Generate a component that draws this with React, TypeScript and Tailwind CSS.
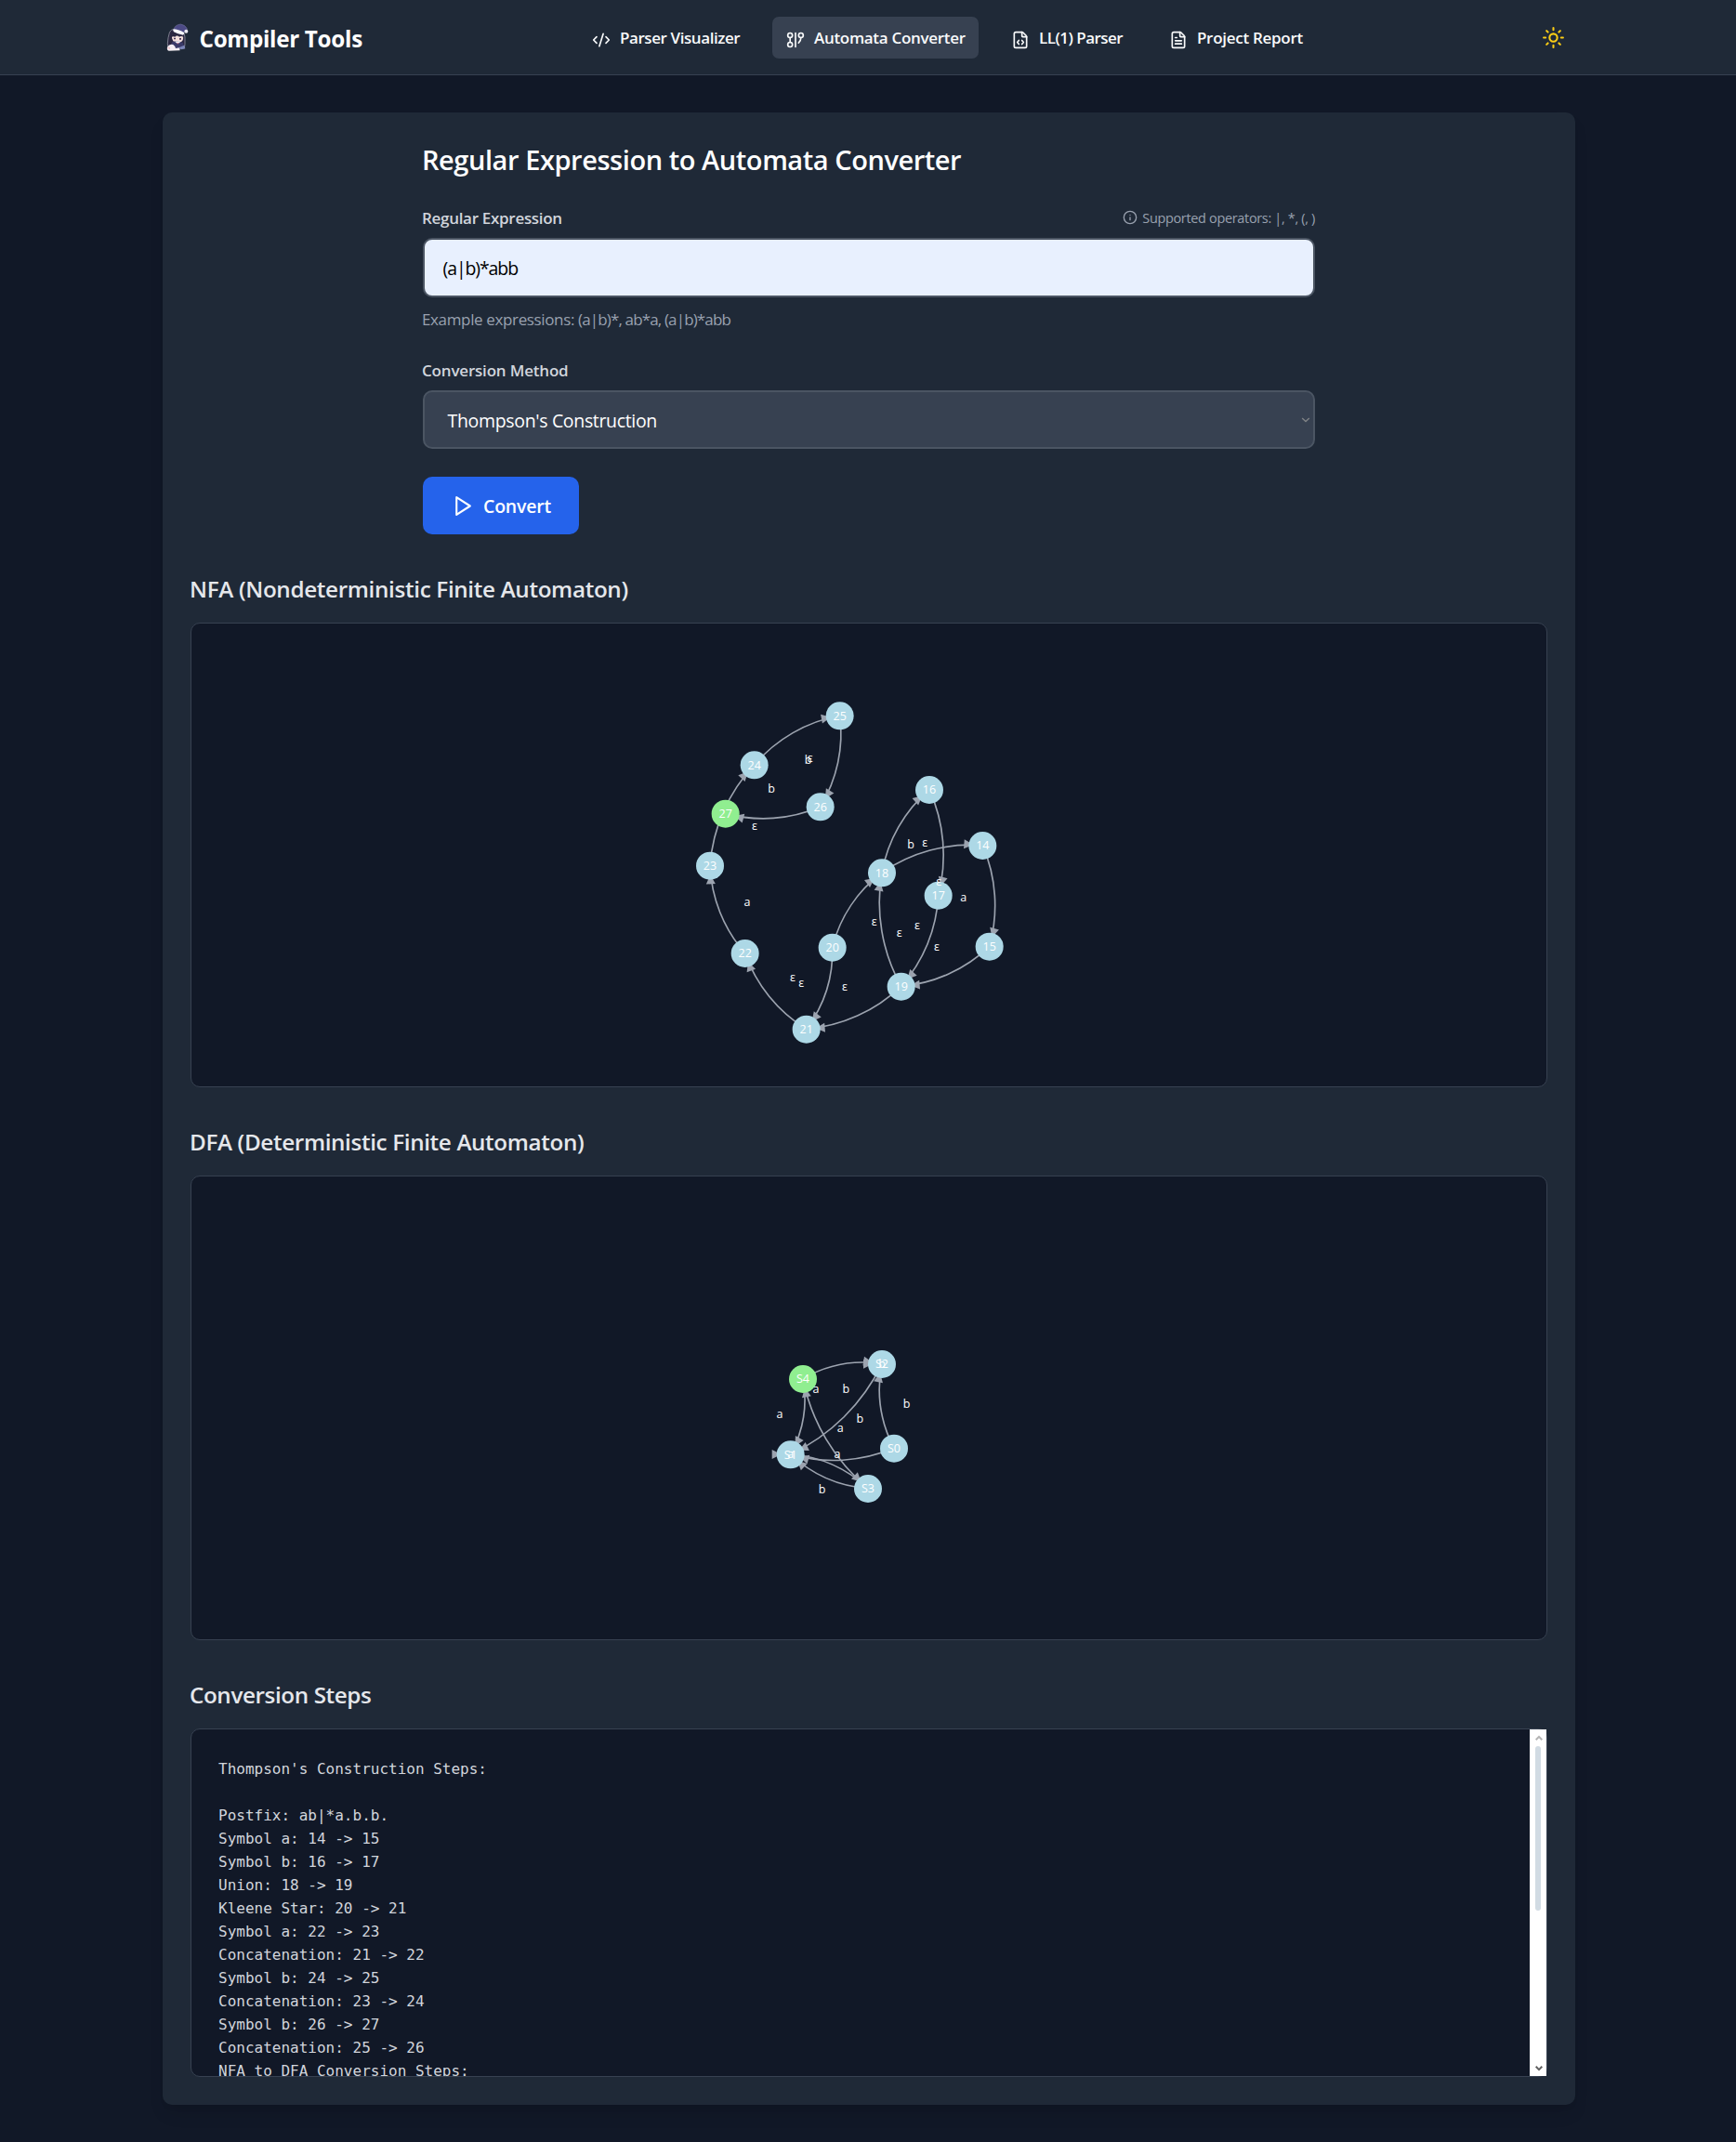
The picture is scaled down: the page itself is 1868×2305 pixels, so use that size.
import type { ReactNode } from "react";
import { CodeXml, GitGraph, FileCode, FileText, Sun, Info } from "lucide-react";

type Point = [number, number];
type Label = { text: string; x: number; y: number };

/* ---------- automaton drawing ---------- */

const NODE_RADIUS = 45;
const ARROW_BACK = 60;
const ARROW_LENGTH = 30;
const ARROW_HALF = 15;
const BEND = Math.asin(1 / 3);

function Edge({ from, to }: { from: Point; to: Point }) {
  const dx = to[0] - from[0];
  const dy = to[1] - from[1];
  const dist = Math.hypot(dx, dy);
  const radius = dist * 1.5;
  const angle = dist === 0 ? 0 : Math.atan2(dy, dx) + BEND;
  const degrees = (angle * 180) / Math.PI;
  return (
    <g>
      {dist > 0 && (
        <path
          d={`M${from[0]} ${from[1]}A${radius} ${radius} 0 0 1 ${to[0]} ${to[1]}`}
          fill="none"
          stroke="#9ca3af"
          strokeWidth={5}
        />
      )}
      <path
        d={`M${-ARROW_BACK} ${-ARROW_HALF}L${-ARROW_BACK + ARROW_LENGTH} 0L${-ARROW_BACK} ${ARROW_HALF}Z`}
        transform={`translate(${to[0]} ${to[1]}) rotate(${degrees})`}
        fill="#9ca3af"
      />
    </g>
  );
}

function Automaton({
  viewBox,
  nodes,
  edges,
  labels,
  accepting,
}: {
  viewBox: string;
  nodes: Record<string, Point>;
  edges: [string, string][];
  labels: Label[];
  accepting: string;
}) {
  return (
    <svg viewBox={viewBox} className="block h-full w-full font-['Open_Sans',sans-serif]">
      {edges.map(([a, b]) => (
        <Edge key={`${a}-${b}`} from={nodes[a]} to={nodes[b]} />
      ))}
      {Object.entries(nodes).map(([id, [x, y]]) => (
        <circle key={id} cx={x} cy={y + 1} r={NODE_RADIUS} fill={id === accepting ? "#90ee90" : "#add8e6"} />
      ))}
      <g fill="#ffffff" fontSize={37.5} textAnchor="middle">
        {Object.entries(nodes).map(([id, [x, y]]) => (
          <text key={id} x={x} y={y + 13.5}>
            {id}
          </text>
        ))}
        {labels.map((l, i) => (
          <text key={i} x={l.x} y={l.y + 1}>
            {l.text}
          </text>
        ))}
      </g>
    </svg>
  );
}

const nfaNodes: Record<string, Point> = {
  "14": [952, 539],
  "15": [974, 865],
  "16": [780, 359],
  "17": [809, 700],
  "18": [627, 627],
  "19": [689, 994],
  "20": [467, 868],
  "21": [383, 1132],
  "22": [185, 887],
  "23": [72, 604],
  "24": [215, 279],
  "25": [491, 120],
  "26": [428, 414],
  "27": [122, 436],
};

const nfaEdges: [string, string][] = [
  ["14", "15"],
  ["16", "17"],
  ["18", "14"],
  ["18", "16"],
  ["15", "19"],
  ["17", "19"],
  ["20", "18"],
  ["20", "21"],
  ["19", "18"],
  ["19", "21"],
  ["22", "23"],
  ["21", "22"],
  ["24", "25"],
  ["23", "24"],
  ["26", "27"],
  ["25", "26"],
];

const nfaLabels: Label[] = [
  { text: "b", x: 389, y: 275 },
  { text: "ε", x: 395, y: 268 },
  { text: "b", x: 270, y: 368 },
  { text: "ε", x: 216, y: 488 },
  { text: "a", x: 192, y: 733 },
  { text: "b", x: 720, y: 548 },
  { text: "ε", x: 766, y: 542 },
  { text: "a", x: 890, y: 718 },
  { text: "ε", x: 811, y: 668 },
  { text: "ε", x: 602, y: 797 },
  { text: "ε", x: 683, y: 833 },
  { text: "ε", x: 741, y: 809 },
  { text: "ε", x: 804, y: 878 },
  { text: "ε", x: 339, y: 977 },
  { text: "ε", x: 367, y: 994 },
  { text: "ε", x: 507, y: 1006 },
];

const dfaNodes: Record<string, Point> = {
  S0: [486, 385],
  S1: [152, 405],
  S2: [447, 113],
  S3: [402, 515],
  S4: [192, 161],
};

const dfaEdges: [string, string][] = [
  ["S0", "S1"],
  ["S0", "S2"],
  ["S1", "S1"],
  ["S1", "S3"],
  ["S2", "S1"],
  ["S2", "S2"],
  ["S3", "S1"],
  ["S3", "S4"],
  ["S4", "S1"],
  ["S4", "S2"],
];

const dfaLabels: Label[] = [
  { text: "a", x: 152, y: 417 },
  { text: "b", x: 447, y: 125 },
  { text: "a", x: 234, y: 206 },
  { text: "b", x: 331, y: 206 },
  { text: "a", x: 117, y: 288 },
  { text: "b", x: 376, y: 302 },
  { text: "a", x: 313, y: 333 },
  { text: "b", x: 527, y: 254 },
  { text: "a", x: 303, y: 416 },
  { text: "b", x: 254, y: 530 },
];

const steps = `Thompson's Construction Steps:

Postfix: ab|*a.b.b.
Symbol a: 14 -> 15
Symbol b: 16 -> 17
Union: 18 -> 19
Kleene Star: 20 -> 21
Symbol a: 22 -> 23
Concatenation: 21 -> 22
Symbol b: 24 -> 25
Concatenation: 23 -> 24
Symbol b: 26 -> 27
Concatenation: 25 -> 26
NFA to DFA Conversion Steps:`;

/* ---------- page pieces ---------- */

function Mascot() {
  return (
    <svg viewBox="50 70 90 96" className="mb-px ml-[1.5px] h-8 w-[30px]">
      <path d="M66 104Q70 92 84 92L112 100Q118 116 116 140L114 154L62 154Q58 140 62 120Z" fill="#2b2741" stroke="#a9abb8" strokeWidth="2" />
      <path d="M74 112Q90 106 110 114Q112 128 104 133Q90 138 78 131Q72 122 74 112Z" fill="#f3dfdc" />
      <path d="M72 118Q74 104 92 106Q108 106 112 118Q104 112 98 117Q90 110 84 117Q78 114 72 118Z" fill="#2b2741" />
      <path d="M80 120h6v5h-6zM98 121h6v5h-6z" fill="#4b3a5c" />
      <path d="M74 134L92 130L110 136L114 152L80 158L70 150Z" fill="#3a3a68" />
      <path d="M84 133L93 140L102 133L98 131H88Z" fill="#f2f2f7" />
      <path d="M91 136l4 0l-2 5z" fill="#c54a63" />
      <path d="M59 150Q66 138 78 142Q86 148 86 154L98 152L100 161L64 162Q57 160 59 150Z" fill="#f5eff3" />
      <path d="M60 152Q63 148 68 151L68 157Q62 158 60 152Z" fill="#f3c9cf" />
      <path d="M96 152L114 144L117 155L104 158Z" fill="#7c86b8" />
      <path d="M79 96Q82 78 102 76Q116 77 124 92L118 96L112 104Q96 98 79 96Z" fill="#4c4a86" stroke="#77789c" strokeWidth="1.5" />
      <path d="M79 92Q94 92 113 103Q115 108 110 111Q94 109 80 101Q76 96 79 92Z" fill="#f7f7fb" />
      <circle cx="120" cy="99" r="6" fill="#eceaf2" />
    </svg>
  );
}

function NavItem({ icon, active, className, children }: { icon: ReactNode; active?: boolean; className: string; children: string }) {
  return (
    <a
      className={`flex h-[45px] items-center gap-2.5 rounded-[7px] pl-[15px] text-[17px] font-semibold whitespace-nowrap text-gray-50 ${active ? "bg-[#374151]" : ""} ${className}`}
    >
      <span className="pt-[5px]">{icon}</span>
      <span className="pt-px">{children}</span>
    </a>
  );
}

function Section({ title, tracking, boxClass, children }: { title: string; tracking: string; boxClass: string; children: ReactNode }) {
  return (
    <section className="mt-10">
      <h3 className={`mb-[19px] -ml-px pt-px text-[24.25px] leading-[35px] font-semibold text-gray-200 ${tracking}`}>{title}</h3>
      <div className={`border border-[#374151] bg-[#111827] ${boxClass}`}>{children}</div>
    </section>
  );
}

export default function App() {
  return (
    <div className="min-h-[2305px] bg-[#111827] font-['Open_Sans',sans-serif]">
      <header className="h-[81px] border-b border-[#374151] bg-[#1f2937] pl-0.5">
        <div className="mx-auto flex h-20 w-[1520px] items-center justify-between">
          <div className="flex items-center gap-2">
            <Mascot />
            <span className="pt-[3px] text-[24.25px] leading-[35px] font-bold tracking-[-0.3px] text-white">Compiler Tools</span>
          </div>
          <nav className="flex items-center gap-5">
            <NavItem className="w-[189px] tracking-[-0.42px]" icon={<CodeXml className="size-5" />}>
              Parser Visualizer
            </NavItem>
            <NavItem active className="w-[222px] tracking-[-0.3px]" icon={<GitGraph className="size-5" />}>
              Automata Converter
            </NavItem>
            <NavItem className="w-[150px] tracking-[-0.52px]" icon={<FileCode className="size-5" />}>
              LL(1) Parser
            </NavItem>
            <NavItem className="w-[175px] tracking-[-0.28px]" icon={<FileText className="size-5" />}>
              Project Report
            </NavItem>
          </nav>
          <button className="py-2.5 pr-[11px] pl-[9px] text-[#facc15]">
            <Sun className="size-[25px]" />
          </button>
        </div>
      </header>

      <main className="py-10 pl-0.5">
        <div className="mx-auto h-[2144px] w-[1520px] rounded-[10px] bg-[#1f2937] p-[30px] shadow-[0_12px_19px_-4px_rgba(0,0,0,0.1),0_5px_8px_-5px_rgba(0,0,0,0.1)]">
          <div className="mx-auto w-[960px]">
            <h2 className="-ml-px h-10 pt-px text-[29px] leading-10 font-semibold tracking-[-0.44px] text-white">
              Regular Expression to Automata Converter
            </h2>

            <div className="mt-[30px] flex h-[25px] items-center justify-between">
              <label className="-ml-px pt-0.5 text-[17px] leading-[25px] font-semibold tracking-[-0.3px] text-gray-300">Regular Expression</label>
              <span className="flex items-center gap-[5px] text-[14.5px] tracking-[-0.34px] text-gray-400">
                <Info className="size-4" />
                <span className="pt-[3px] leading-5">Supported operators: |, *, (, )</span>
              </span>
            </div>
            <div className="mt-2.5 flex h-16 items-center rounded-[10px] border-2 border-[#4b5563] bg-[#e8f0fe] pt-0.5 pl-[19.5px] text-[19.5px] tracking-[-1.1px] text-black">
              (a|b)*abb
            </div>
            <p className="mt-[11px] -ml-px h-6 text-[17px] leading-[25px] text-gray-400">
              <span className="tracking-[-0.36px]">Example expressions: </span>
              <span className="tracking-[-0.86px]">(a|b)*, ab*a, (a|b)*abb</span>
            </p>

            <label className="mt-[31px] -ml-px block h-6 text-[17px] leading-[25px] font-semibold tracking-[-0.19px] text-gray-300">
              Conversion Method
            </label>
            <div className="mt-2.5 flex h-[63px] items-center justify-between rounded-[10px] border-2 border-[#4b5563] bg-[#374151] pr-[3px] pl-[24.5px] text-[19.5px] tracking-[-0.33px] text-white">
              <span className="pt-[3px]">Thompson's Construction</span>
              <svg viewBox="0 0 10 8" className="h-2 w-2.5" fill="none" stroke="#7f8285" strokeWidth="1.4">
                <path d="M1.2 2L5 5.6L8.8 2" />
              </svg>
            </div>

            <button className="mt-[30px] flex h-[62px] w-[168px] items-center rounded-[10px] bg-[#2563eb] pl-[30px] text-[19.5px] font-semibold tracking-[-0.2px] text-white">
              <svg viewBox="0 0 24 24" className="mr-2.5 size-[25px]" fill="none" stroke="currentColor" strokeWidth="2" strokeLinecap="round" strokeLinejoin="round">
                <polygon points="6 3 20 12 6 21 6 3" />
              </svg>
              <span className="pt-0.5">Convert</span>
            </button>
          </div>

          <Section title="NFA (Nondeterministic Finite Automaton)" tracking="tracking-[-0.34px]" boxClass="h-[500px] rounded-[10px]">
            <Automaton viewBox="-1602 -177 4374 1494" nodes={nfaNodes} edges={nfaEdges} labels={nfaLabels} accepting="27" />
          </Section>

          <Section title="DFA (Deterministic Finite Automaton)" tracking="tracking-[-0.36px]" boxClass="h-[500px] rounded-[10px]">
            <Automaton viewBox="-1782 -492 4374 1494" nodes={dfaNodes} edges={dfaEdges} labels={dfaLabels} accepting="S4" />
          </Section>

          <Section title="Conversion Steps" tracking="tracking-[-0.4px]" boxClass="flex h-[375px] justify-between rounded-[10px]">
            <pre className="h-[373px] overflow-hidden pt-[30px] pl-[29px] font-['DejaVu_Sans_Mono',monospace] text-[16px] leading-[25px] text-gray-300">
              {steps}
            </pre>
            <div className="flex h-[373px] w-[18px] flex-col items-center bg-white">
              <svg viewBox="0 0 8 6" className="mt-1.5 ml-px h-1.5 w-2" fill="none" stroke="#b4b4b4" strokeWidth="2">
                <path d="M0.7 5.2L4 1.9L7.3 5.2" />
              </svg>
              <div className="mt-1.5 h-[177px] w-1.5 rounded-full bg-[#d1dbe3]" />
              <svg viewBox="0 0 8 6" className="mt-auto mb-[5px] ml-px h-1.5 w-2" fill="none" stroke="#606060" strokeWidth="2">
                <path d="M0.7 0.8L4 4.1L7.3 0.8" />
              </svg>
            </div>
          </Section>
        </div>
      </main>
    </div>
  );
}
